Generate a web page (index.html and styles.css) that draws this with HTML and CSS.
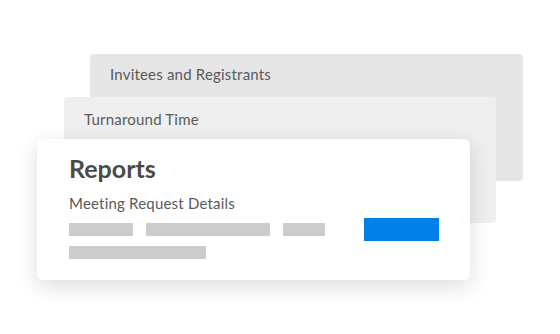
FILE: index.html
```html
<!DOCTYPE html>
<html lang="en">
<head>
    <meta charset="UTF-8">
    <meta name="viewport" content="width=device-width, initial-scale=1.0">
    <title>Reports</title>
    <link rel="stylesheet" href="styles.css">
</head>
<body>

    <div class="stack">
        <div class="card card-back">
            <p class="card-label">Invitees and Registrants</p>
        </div>
        <div class="card card-middle">
            <p class="card-label">Turnaround Time</p>
        </div>
        <div class="card card-front">
            <h1>Reports</h1>
            <p class="subtitle">Meeting Request Details</p>
            <div class="bar-row">
                <span class="bar bar-short"></span>
                <span class="bar bar-long"></span>
                <span class="bar bar-tiny"></span>
                <span class="action"></span>
            </div>
            <div class="bar-row">
                <span class="bar bar-wide"></span>
            </div>
        </div>
    </div>

</body>
</html>
```

FILE: styles.css
```css
* {
    margin: 0;
    padding: 0;
    box-sizing: border-box;
}

body {
    font-family: 'Lato', 'Liberation Sans', sans-serif;
    background-color: #ffffff;
    color: #555555;
    width: 560px;
    height: 334px;
    overflow: hidden;
}

.stack {
    padding-top: 54px;
}

.card {
    position: relative;
    width: 433px;
    border-radius: 4px;
}

.card-label {
    font-size: 15px;
    line-height: 20px;
    letter-spacing: 0.2px;
    color: #5a5a5a;
    padding-left: 20px;
}

/* Back card */
.card-back {
    margin-left: 90px;
    height: 127px;
    background-color: #e6e6e6;
    padding-top: 10px;
}

/* Middle card */
.card-middle {
    margin-left: 64px;
    margin-top: -84px;
    width: 432px;
    height: 126px;
    background-color: #efefef;
    padding-top: 12px;
}

/* Front card */
.card-front {
    margin-left: 37px;
    margin-top: -84px;
    height: 141px;
    background-color: #ffffff;
    border-radius: 6px;
    padding: 14px 31px 0 32px;
    box-shadow: 0px 6px 22px rgba(0, 0, 0, 0.14);
}

h1 {
    font-size: 25px;
    font-weight: 700;
    line-height: 30px;
    color: #4a4a4a;
}

.subtitle {
    font-size: 15px;
    line-height: 20px;
    letter-spacing: 0.2px;
    color: #5a5a5a;
    margin-top: 10px;
}

.bar-row {
    display: flex;
    align-items: center;
    gap: 13px;
    margin-top: 5px;
}

.bar {
    display: block;
    height: 13px;
    background-color: #cccccc;
}

.bar-short {
    width: 64px;
}

.bar-long {
    width: 124px;
}

.bar-tiny {
    width: 42px;
}

.bar-wide {
    width: 137px;
}

.action {
    display: block;
    width: 75px;
    height: 23px;
    margin-left: 26px;
    background-color: #0080e8;
}
```
